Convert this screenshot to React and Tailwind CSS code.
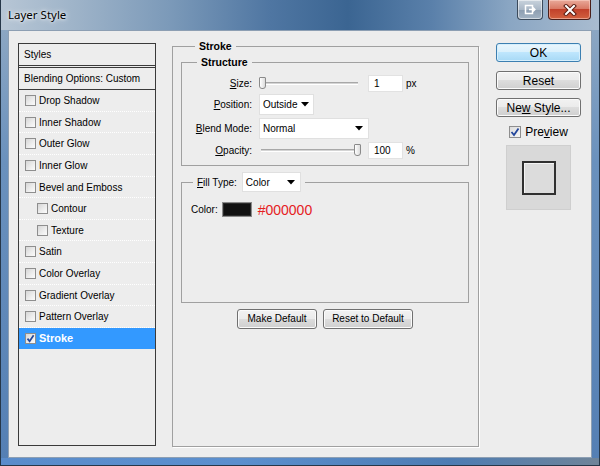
import React from "react";

function Check({ checked }) {
  return (
    <span className="flex h-[11px] w-[11px] shrink-0 items-center justify-center border border-[#8e8e8e] bg-[linear-gradient(135deg,#d6d6d6_0%,#eeeeee_60%,#fbfbfb_100%)]">
      {checked && (
        <svg width="9" height="9" viewBox="0 0 9 9">
          <path d="M1.5 4.6 L3.6 7.2 L7.6 1.2" fill="none" stroke="#23469b" strokeWidth="1.7" />
        </svg>
      )}
    </span>
  );
}

function Arrow() {
  return (
    <svg width="8" height="5" viewBox="0 0 8 5" className="shrink-0">
      <polygon points="0,0 8,0 4,4.5" fill="#000" />
    </svg>
  );
}

const items = [
  { label: "Drop Shadow", h: "h-[22px]", indent: false },
  { label: "Inner Shadow", h: "h-[21px]", indent: false },
  { label: "Outer Glow", h: "h-[22px]", indent: false },
  { label: "Inner Glow", h: "h-[22px]", indent: false },
  { label: "Bevel and Emboss", h: "h-[21px]", indent: false },
  { label: "Contour", h: "h-[22px]", indent: true },
  { label: "Texture", h: "h-[21px]", indent: true },
  { label: "Satin", h: "h-[22px]", indent: false },
  { label: "Color Overlay", h: "h-[22px]", indent: false },
  { label: "Gradient Overlay", h: "h-[21px]", indent: false },
  { label: "Pattern Overlay", h: "h-[22px]", indent: false },
];

function Slider({ thumbLeft }) {
  return (
    <div className="relative h-[18px] w-[103px] shrink-0">
      <div className="absolute left-[2px] right-[4px] top-[8px] h-[3px] border-t border-[#a8a8a8] border-b border-b-white bg-[#d4d4d4]" />
      <div
        className={`absolute top-[3px] h-[12px] w-[7px] rounded-b-[3px] rounded-t-[1px] border border-[#8a8a8a] bg-[linear-gradient(90deg,#ffffff,#dcdcdc)] ${thumbLeft}`}
      />
    </div>
  );
}

function WinButton({ children, primary }) {
  return (
    <div
      className={
        primary
          ? "flex h-[19px] w-[85px] items-center justify-center rounded-[3px] border border-[#3c7fb1] bg-[linear-gradient(180deg,#eaf6fd_0%,#d9f0fc_49%,#bee6fd_50%,#a7d9f5_100%)] text-[12px] leading-none text-black shadow-[inset_0_0_0_1px_#d6effc]"
          : "flex h-[19px] w-[85px] items-center justify-center rounded-[3px] border border-[#707070] bg-[linear-gradient(180deg,#f2f2f2_0%,#ebebeb_49%,#dddddd_50%,#cfcfcf_100%)] text-[12px] leading-none text-black shadow-[inset_0_0_0_1px_#fbfbfb]"
      }
    >
      {children}
    </div>
  );
}

function SmallButton({ children, w }) {
  return (
    <div
      className={`flex h-[20px] items-center justify-center rounded-[3px] border border-[#707070] bg-[linear-gradient(180deg,#f2f2f2_0%,#ebebeb_49%,#dddddd_50%,#cfcfcf_100%)] text-[10px] leading-none text-black shadow-[inset_0_0_0_1px_#fbfbfb] ${w}`}
    >
      {children}
    </div>
  );
}

export default function App() {
  return (
    <div className="relative flex h-[466px] w-[600px] flex-col overflow-hidden border-x border-b border-[#263749] bg-[linear-gradient(180deg,#93abc4_0%,#6a91bd_35%,#547fb4_100%)] font-['Liberation_Sans',Arial,sans-serif] text-black">
      {/* Title bar */}
      <div className="flex h-[30px] shrink-0 items-center bg-[linear-gradient(90deg,#b7c6d5_0%,#9fb4c9_12%,#7c9ab9_28%,#4f76a2_45%,#3b6592_58%,#5a80aa_72%,#8aa6c3_85%,#a9bcd0_100%)] pl-[7px]">
        <span className="font-['Noto_Sans',sans-serif] text-[11.5px] text-black [text-shadow:0_0_6px_#ffffff,0_0_3px_#ffffff]">
          Layer Style
        </span>
      </div>
      {/* title buttons */}
      <div className="absolute right-[8px] top-0 flex gap-[5px]">
        <div className="flex h-[20px] w-[26px] items-center justify-center rounded-b-[4px] border border-t-0 border-[#3b4a5b] bg-[linear-gradient(180deg,#c9d3dd_0%,#a9b7c6_50%,#8c9db0_51%,#a3b3c4_100%)] shadow-[inset_0_0_0_1px_rgba(255,255,255,0.5)]">
          <svg width="12" height="11" viewBox="0 0 12 11">
            <rect x="1.5" y="1.5" width="7" height="8" fill="none" stroke="#fff" strokeWidth="1.5" />
            <path d="M5 5.5 H11 M9 3.5 L11 5.5 L9 7.5" fill="none" stroke="#fff" strokeWidth="1.3" />
          </svg>
        </div>
        <div className="flex h-[20px] w-[43px] items-center justify-center rounded-b-[4px] border border-t-0 border-[#4a1f1a] bg-[linear-gradient(180deg,#e9a99a_0%,#d97a66_45%,#c2412b_50%,#d2613f_100%)] shadow-[inset_0_0_0_1px_rgba(255,220,210,0.5)]">
          <svg width="14" height="12" viewBox="0 0 14 12">
            <path d="M3 2 L11 10 M11 2 L3 10" stroke="#5a1c12" strokeWidth="4" strokeLinecap="square" />
            <path d="M3 2 L11 10 M11 2 L3 10" stroke="#ffffff" strokeWidth="2" strokeLinecap="square" />
          </svg>
        </div>
      </div>

      {/* Client area */}
      <div className="mx-[7px] flex h-[428px] shrink-0 border border-[#8d9fb3] bg-[#ededed] pl-[9px] pt-[12px]">
        {/* Left list panel */}
        <div className="flex h-[403px] w-[138px] shrink-0 flex-col border border-[#3a3a3a] bg-[#ededed] text-[10px]">
          <div className="flex h-[21px] items-center pl-[5px]">Styles</div>
          <div className="h-[3px] border-y border-[#3a3a3a]" />
          <div className="flex h-[22px] items-center border-b border-[#3a3a3a] pl-[5px]">
            Blending Options: Custom
          </div>
          {items.map((it) => (
            <div
              key={it.label}
              className={`flex items-center gap-[3px] border-b border-dotted border-b-white ${it.h} ${
                it.indent ? "pl-[18px]" : "pl-[6px]"
              }`}
            >
              <Check />
              <span>{it.label}</span>
            </div>
          ))}
          <div className="flex h-[21px] items-center gap-[3px] bg-[#3399ff] pl-[6px]">
            <Check checked />
            <span className="text-[11px] font-bold text-white">Stroke</span>
          </div>
        </div>

        {/* Middle group */}
        <fieldset className="ml-[16px] mt-[-4px] h-[408px] w-[307px] shrink-0 border border-[#a0a0a0] pl-[8px] pr-[9px] shadow-[1px_1px_0_#ffffff]">
          <legend className="ml-[14px] px-[4px] text-[10.5px] font-bold leading-[14px]">Stroke</legend>

          <fieldset className="mt-[2px] border border-[#a0a0a0] pb-[6px] text-[10px]">
            <legend className="ml-[15px] px-[4px] text-[10.5px] font-bold leading-[14px]">Structure</legend>
            {/* Size */}
            <div className="mt-[5px] flex h-[18px] items-center">
              <div className="w-[70px] text-right">
                <span className="underline">S</span>ize:
              </div>
              <div className="ml-[7px]">
                <Slider thumbLeft="left-0" />
              </div>
              <div className="ml-[6px] flex h-[17px] w-[35px] items-center border border-[#e2e2e2] bg-white pl-[5px]">1</div>
              <span className="ml-[3px]">px</span>
            </div>
            {/* Position */}
            <div className="mt-[2px] flex h-[21px] items-center">
              <div className="w-[70px] text-right">
                <span className="underline">P</span>osition:
              </div>
              <div className="ml-[7px] flex h-[21px] w-[55px] items-center justify-between border border-[#e0e0e0] bg-white pl-[3px] pr-[4px]">
                <span>Outside</span>
                <Arrow />
              </div>
            </div>
            {/* Blend Mode */}
            <div className="mt-[3px] flex h-[21px] items-center">
              <div className="w-[70px] text-right">
                <span className="underline">B</span>lend Mode:
              </div>
              <div className="ml-[7px] flex h-[21px] w-[110px] items-center justify-between border border-[#e0e0e0] bg-white pl-[3px] pr-[5px]">
                <span>Normal</span>
                <Arrow />
              </div>
            </div>
            {/* Opacity */}
            <div className="mt-[2px] flex h-[18px] items-center">
              <div className="w-[70px] text-right">
                <span className="underline">O</span>pacity:
              </div>
              <div className="ml-[7px]">
                <Slider thumbLeft="left-[95px]" />
              </div>
              <div className="ml-[6px] flex h-[17px] w-[35px] items-center border border-[#e2e2e2] bg-white pl-[5px]">100</div>
              <span className="ml-[3px]">%</span>
            </div>
          </fieldset>

          <fieldset className="mt-[6px] h-[131px] border border-[#a0a0a0] text-[10px]">
            <legend className="ml-[11px] flex items-center px-[4px]">
              <span>
                <span className="underline">F</span>ill Type:
              </span>
              <div className="ml-[5px] flex h-[20px] w-[59px] items-center justify-between border border-[#e0e0e0] bg-white pl-[3px] pr-[5px]">
                <span>Color</span>
                <Arrow />
              </div>
            </legend>
            <div className="mt-[10px] flex h-[15px] items-center pl-[9px]">
              <span>Color:</span>
              <div className="ml-[4px] h-[15px] w-[30px] border border-[#8a8a8a] bg-[#111111] shadow-[inset_0_0_0_1px_#2a2a2a]" />
              <span className="ml-[6px] text-[14px] leading-none text-[#e5211f]">#000000</span>
            </div>
          </fieldset>

          <div className="mt-[6px] flex justify-center gap-[6px]">
            <SmallButton w="w-[80px]">Make Default</SmallButton>
            <SmallButton w="w-[90px]">Reset to Default</SmallButton>
          </div>
        </fieldset>

        {/* Right column */}
        <div className="ml-[17px] flex w-[85px] shrink-0 flex-col items-center">
          <WinButton primary>OK</WinButton>
          <div className="mt-[9px]">
            <WinButton>Reset</WinButton>
          </div>
          <div className="mt-[8px]">
            <WinButton>
              <span>
                Ne<span className="underline">w</span> Style...
              </span>
            </WinButton>
          </div>
          <div className="mt-[8px] flex h-[13px] items-center gap-[4px] text-[12px]">
            <span className="flex h-[12px] w-[12px] items-center justify-center border border-[#8e8e8e] bg-[linear-gradient(135deg,#dcdcdc_0%,#f6f6f6_100%)]">
              <svg width="10" height="10" viewBox="0 0 10 10">
                <path d="M1.5 5 L4 8 L8.5 1.5" fill="none" stroke="#23469b" strokeWidth="1.8" />
              </svg>
            </span>
            <span>
              Pre<span className="underline">v</span>iew
            </span>
          </div>
          <div className="mt-[7px] flex h-[65px] w-[65px] items-center justify-center border border-[#cfcfcf] bg-[#d9d9d9]">
            <div className="h-[34px] w-[34px] border-2 border-[#303030] bg-[#dcdcdc] shadow-[inset_1px_1px_0_#f4f4f4]" />
          </div>
        </div>
      </div>

      {/* bottom frame */}
      <div className="h-[7px] shrink-0 bg-[linear-gradient(90deg,#5a8ccb_0%,#5b8fce_40%,#4d7cb3_75%,#6f8499_100%)]" />
    </div>
  );
}
